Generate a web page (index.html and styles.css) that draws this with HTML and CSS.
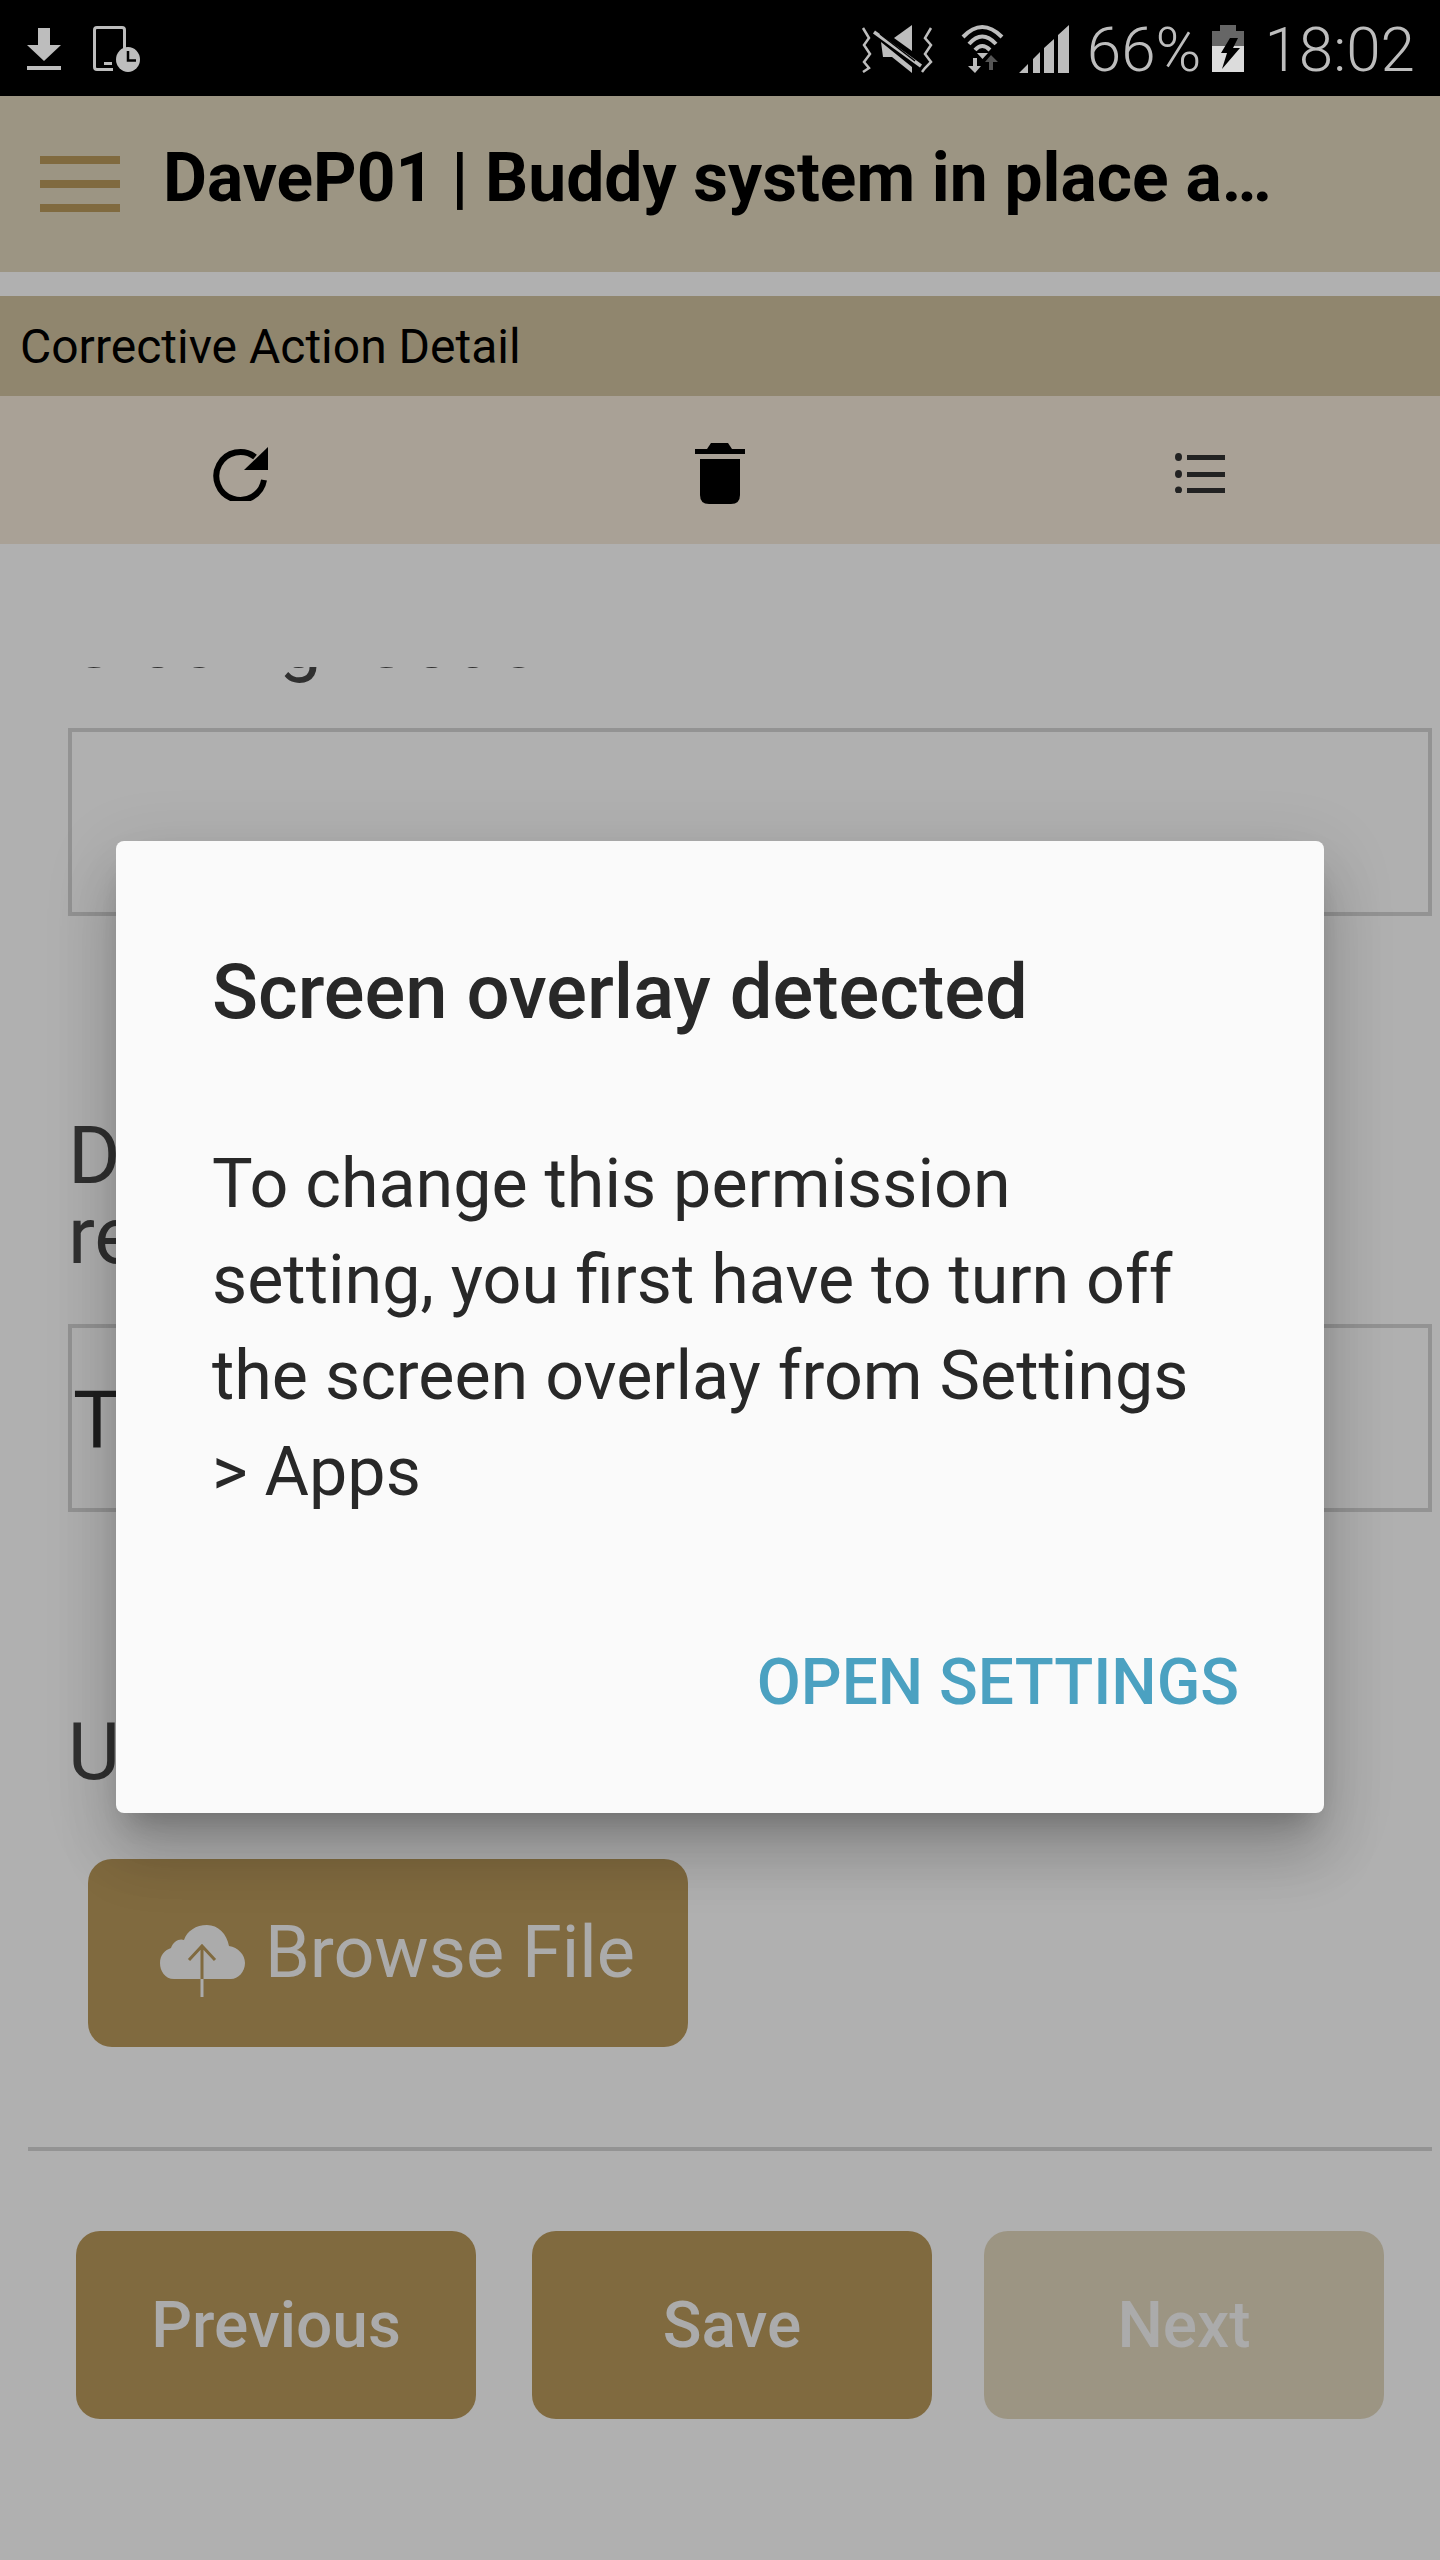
FILE: index.html
```html
<!DOCTYPE html>
<html lang="en">
<head>
<meta charset="UTF-8" />
<meta name="viewport" content="width=device-width, initial-scale=1" />
<title>Corrective Action Detail</title>
<link rel="stylesheet" href="styles.css">
</head>
<body>
  <!-- Android status bar -->
  <div class="status-bar">
    <div class="status-left">
      <svg class="icon-download" width="34" height="42" viewBox="0 0 34 42">
        <path d="M11 0H23V17H34L17 33L0 17H11Z" fill="#bdbdbd"/>
        <rect x="0" y="38" width="34" height="4" fill="#bdbdbd"/>
      </svg>
      <svg class="icon-phone" width="47" height="46" viewBox="0 0 47 46">
        <path d="M31.5 26V4Q31.5 1.5 29 1.5H4Q1.5 1.5 1.5 4V41Q1.5 43.5 4 43.5H20M11 37.500H19" fill="none" stroke="#bdbdbd" stroke-width="3"/>
        <ellipse cx="35" cy="33.500" rx="12" ry="12.500" fill="#bdbdbd"/>
        <path d="M35 25V34.500H43" fill="none" stroke="#000" stroke-width="2.500"/>
      </svg>
    </div>
    <div class="status-right">
      <svg class="icon-mute" width="72" height="48" viewBox="0 0 72 48">
        <path d="M2 3L8 13L3 20L9 29L3 37L8 43L2 47M70 3L64 13L70 20L64 29L70 37L64 43L61 47" fill="none" stroke="#bdbdbd" stroke-width="2.500"/>
        <path d="M33 13L51 0V26Z" fill="#bdbdbd"/>
        <path d="M20 17L22 32H31L51 48V42Z" fill="#bdbdbd"/>
        <path d="M13 7L60 41" stroke="#bdbdbd" stroke-width="3.500"/>
        <path d="M19 9L54 36" stroke="#000" stroke-width="1.500"/>
      </svg>
      <svg class="icon-wifi" width="43" height="49" viewBox="0 0 43 49">
        <path d="M2 13Q21 -7 41 13M8 20Q21 5 35 20M14 26Q21 18 29 26" fill="none" stroke="#bdbdbd" stroke-width="4"/>
        <path d="M16 29H27L21.500 35Z" fill="#bdbdbd"/>
        <path d="M12 34H16V42H20L14 49L7 42H12Z" fill="#bdbdbd"/>
        <path d="M28 46V38H24L30 31L37 38H32V46Z" fill="#555"/>
      </svg>
      <svg class="icon-signal" width="50" height="48" viewBox="0 0 50 48">
        <path d="M0 48L9 39V48ZM14 34L21 27V48H14ZM25 23L35 14V48H25ZM39 10L50 0V48H39Z" fill="#bdbdbd"/>
      </svg>
      <span class="battery-level">66%</span>
      <svg class="icon-battery" width="32" height="47" viewBox="0 0 32 47">
        <rect x="8" y="0" width="16" height="7" fill="#666"/>
        <rect x="0" y="6" width="32" height="15" fill="#666"/>
        <rect x="0" y="21" width="32" height="26" fill="#dcdcdc"/>
        <path d="M18 13H26L21 23H28L10 44L15 28H9Z" fill="#000"/>
      </svg>
      <span class="clock">18:02</span>
    </div>
  </div>

  <header class="app-header">
    <div class="hamburger"><span></span><span></span><span></span></div>
    <h1>DaveP01 | Buddy system in place a…</h1>
  </header>

  <div class="section-title">Corrective Action Detail</div>

  <div class="toolbar">
    <svg width="56" height="55" viewBox="0 0 56 55">
      <path d="M43 11A24 24 0 1 0 52 34" fill="none" stroke="#000" stroke-width="6"/>
      <path d="M56 1V24H32Z" fill="#000"/>
    </svg>
    <svg width="50" height="61" viewBox="0 0 50 61">
      <path d="M12 6L16 0H33L37 6Z" fill="#000"/>
      <rect x="0" y="6" width="50" height="5" fill="#000"/>
      <path d="M5 16H45V52Q45 61 36 61H14Q5 61 5 52Z" fill="#000"/>
    </svg>
    <svg width="50" height="40" viewBox="0 0 50 40">
      <g fill="#222">
        <ellipse cx="3.500" cy="4" rx="3.500" ry="4"/>
        <ellipse cx="3.500" cy="21" rx="3.500" ry="4"/>
        <ellipse cx="3.500" cy="37" rx="3.500" ry="3.500"/>
        <rect x="12" y="2" width="38" height="5"/>
        <rect x="12" y="19" width="38" height="5"/>
        <rect x="12" y="35" width="38" height="5"/>
      </g>
    </svg>
  </div>

  <main class="form-scroll">
    <div class="form-content">
      <label class="field-label first">Closing Code</label>
      <div class="field-box"></div>

      <label class="field-label field-gap">Details of<br>required</label>
      <div class="field-box">Test</div>

      <label class="field-label field-gap">Upload</label>
      <button class="browse-btn" type="button">
        <svg width="85" height="72" viewBox="0 0 85 72">
          <path d="M14 54C5 54 0 46 0 38C0 30 5 25 11 23C13 16 20 13 24 15C27 6 36 0 47 0C58 0 67 9 69 21C78 22 85 30 85 38C85 47 78 54 71 54Z" fill="#ababab"/>
          <path d="M42 22V54M29 35L42 21L55 35" fill="none" stroke="#806a3f" stroke-width="3"/>
          <path d="M42 54V72" stroke="#ababab" stroke-width="3"/>
        </svg>
        Browse File
      </button>

      <hr class="divider" />

      <div class="nav-buttons">
        <button class="nav-btn" type="button">Previous</button>
        <button class="nav-btn" type="button">Save</button>
        <button class="nav-btn next" type="button">Next</button>
      </div>
    </div>
  </main>

  <!-- Permission dialog -->
  <div class="dialog-wrap">
    <div class="dialog" role="dialog">
      <h2>Screen overlay detected</h2>
      <p>To change this permission setting, you first have to turn off the screen overlay from Settings &gt; Apps</p>
      <div class="dialog-actions">
        <a class="dialog-btn">OPEN SETTINGS</a>
      </div>
    </div>
  </div>
</body>
</html>
```

FILE: styles.css
```css
/* Reset */
* {
  box-sizing: border-box;
}

body {
  font-family: Roboto, 'Noto Sans', sans-serif;
  background: #b0b0b0;
  margin: 0;
  width: 1440px;
  height: 2560px;
  position: relative;
  overflow: hidden;
  display: flex;
  flex-direction: column;
}

/* Status bar */
.status-bar {
  height: 96px;
  background: #000;
  color: #bdbdbd;
  display: flex;
  justify-content: space-between;
  padding: 0 25px 0 27px;
  flex-shrink: 0;
}

.status-left {
  display: flex;
  gap: 32px;
  align-items: flex-start;
}

.icon-download {
  margin-top: 28px;
}

.icon-phone {
  margin-top: 26px;
}

.status-right {
  display: flex;
  align-items: flex-start;
}

.icon-mute {
  margin-top: 25px;
}

.icon-wifi {
  margin: 24px 0 0 28px;
}

.icon-signal {
  margin: 25px 0 0 15px;
}

.icon-battery {
  margin: 25px 0 0 11px;
}

.battery-level,
.clock {
  font-size: 62px;
  font-weight: 300;
  line-height: 62px;
  margin-top: 19px;
}

.battery-level {
  margin-left: 18px;
}

.clock {
  margin-left: 20px;
}

/* App header */
.app-header {
  height: 176px;
  background: #9c9583;
  display: flex;
  align-items: center;
  padding-left: 40px;
  flex-shrink: 0;
}

.hamburger {
  width: 80px;
  display: flex;
  flex-direction: column;
  gap: 16px;
}

.hamburger span {
  height: 8px;
  background: #806a3f;
}

.app-header h1 {
  margin: 0 0 13px 43px;
  font-size: 67.7px;
  font-weight: 700;
  color: #000;
  white-space: nowrap;
}

.section-title {
  margin-top: 24px;
  height: 100px;
  background: #90866e;
  color: #000;
  font-size: 48px;
  line-height: 102px;
  padding-left: 20px;
  flex-shrink: 0;
}

.toolbar {
  height: 148px;
  padding-top: 6px;
  background: #a9a196;
  display: grid;
  grid-template-columns: repeat(3, 1fr);
  justify-items: center;
  align-items: center;
  flex-shrink: 0;
}

/* Form, scrolled so the first label is cut off */
.form-scroll {
  margin-top: 123px;
  flex-grow: 1;
  overflow: hidden;
}

.form-content {
  margin-top: -64px;
  padding: 0 8px 0 68px;
}

.field-label {
  display: block;
  font-size: 80px;
  line-height: 80px;
  color: #303030;
}

.field-label.first {
  font-size: 76px;
  line-height: 76px;
  word-spacing: 20px;
  padding-bottom: 1px;
}

.field-gap {
  margin-top: 200px;
}

.field-box {
  margin-top: 48px;
  height: 188px;
  border: 4px solid #939393;
  font-size: 80px;
  color: #1f1f1f;
  display: flex;
  align-items: center;
  padding: 6px 0 0 1px;
}

.browse-btn {
  margin: 67px 0 0 20px;
  width: 600px;
  height: 188px;
  background: #806a3f;
  color: #ababab;
  border: none;
  border-radius: 24px;
  font-family: inherit;
  font-size: 72px;
  display: flex;
  align-items: center;
  gap: 20px;
  padding: 0 0 2px 72px;
}

.browse-btn svg {
  margin-top: 18px;
}

.divider {
  margin: 100px 0 0 -40px;
  height: 4px;
  border: none;
  background: #939393;
}

.nav-buttons {
  margin: 80px 0 0 8px;
  display: flex;
  gap: 56px;
}

.nav-btn {
  width: 400px;
  height: 188px;
  background: #806a3f;
  color: #ababab;
  border: none;
  border-radius: 24px;
  font-family: inherit;
  font-size: 64px;
  font-weight: 500;
  padding: 0;
}

.nav-btn.next {
  background: #9c9583;
  margin-left: -4px;
}

/* Dialog */
.dialog-wrap {
  position: absolute;
  top: 94px;
  left: 0;
  right: 0;
  bottom: 0;
  display: flex;
  justify-content: center;
  align-items: center;
}

.dialog {
  width: 1208px;
  background: #fafafa;
  border-radius: 8px;
  padding: 103px 85px 98px 96px;
  color: #282828;
  box-shadow: 0 44px 60px 0 rgba(0, 0, 0, 0.16), 0 18px 70px 8px rgba(0, 0, 0, 0.1), 0 20px 26px -14px rgba(0, 0, 0, 0.2);
}

.dialog h2 {
  margin: 0;
  font-size: 76px;
  font-weight: 500;
  line-height: 96px;
}

.dialog p {
  margin: 96px 11px 0 0;
  font-size: 68.2px;
  line-height: 96px;
}

.dialog-actions {
  margin-top: 131px;
  display: flex;
  justify-content: flex-end;
}

.dialog-btn {
  font-size: 64px;
  font-weight: 500;
  line-height: 64px;
  color: #4ba1c1;
}
```
